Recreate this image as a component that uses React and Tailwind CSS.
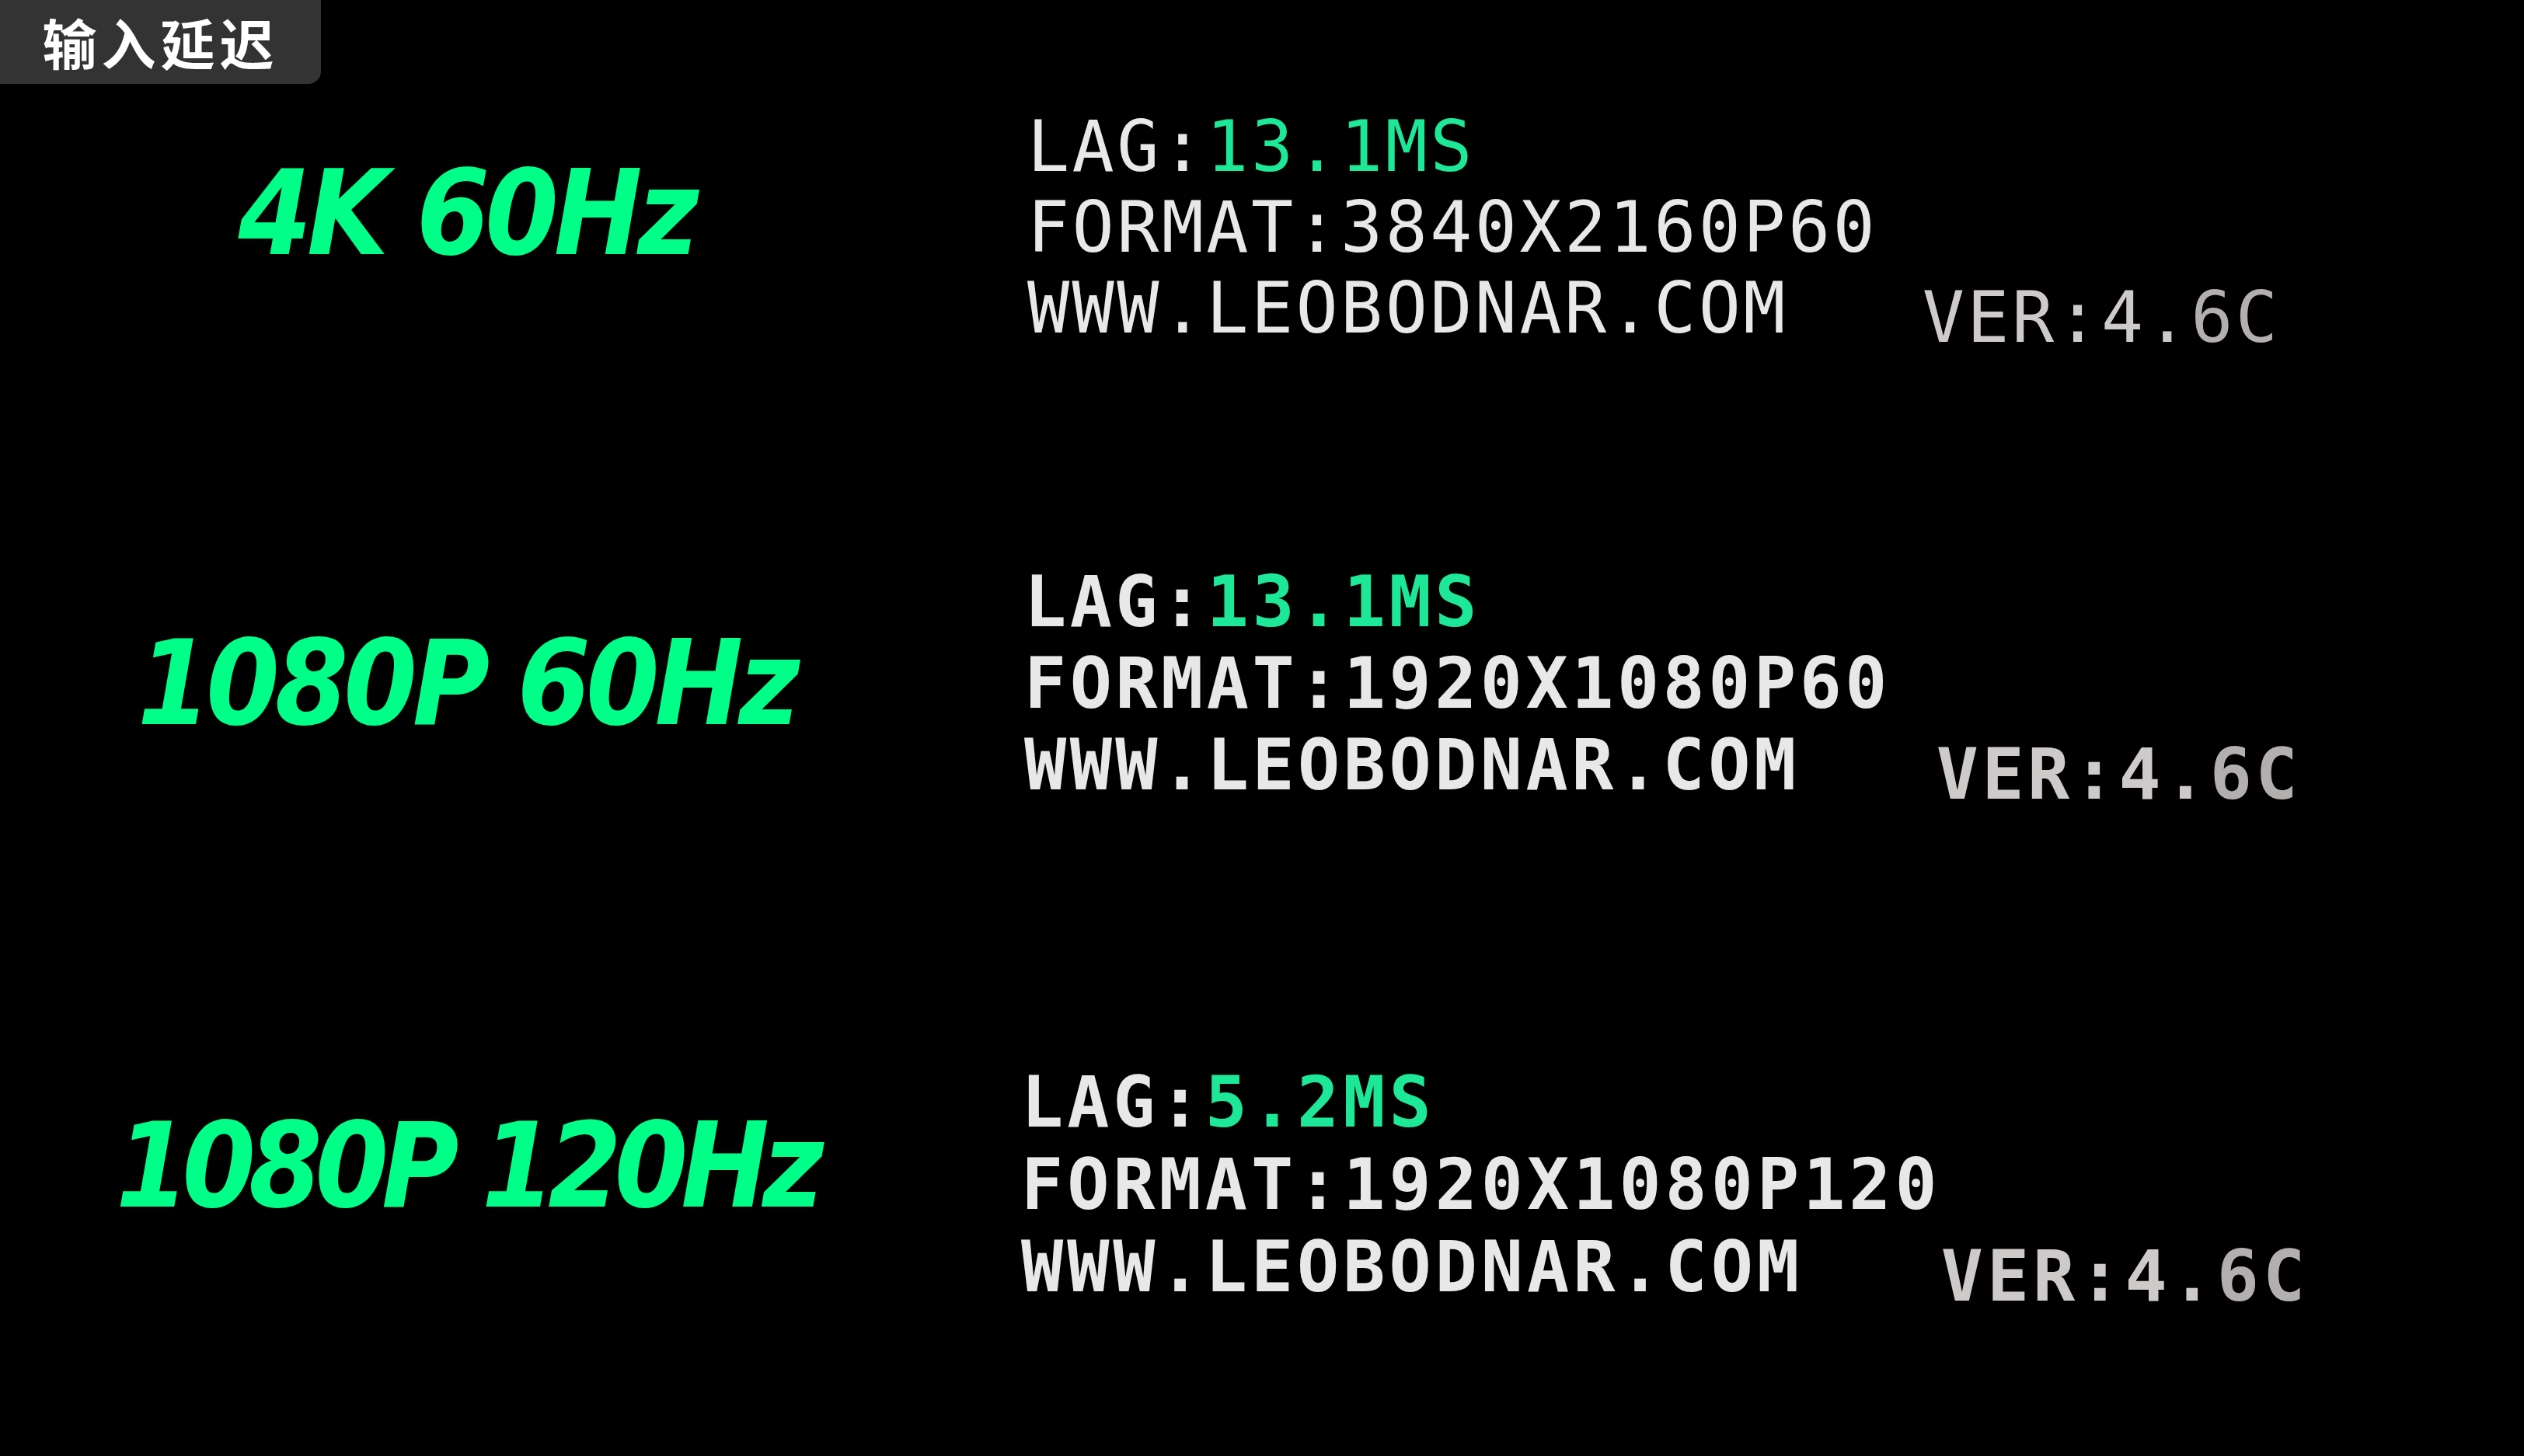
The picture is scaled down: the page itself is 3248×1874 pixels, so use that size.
import React from "react";

const rows = [
  {
    title: "4K 60Hz",
    lag: "13.1MS",
    format: "3840X2160P60",
    mt: "mt-[29px]",
    titleMt: "mt-[63px]",
    lh: "leading-[104px]",
    weight: "font-normal",
    left: "ml-[1322px]",
    track: "tracking-[3.4px]",
    htrack: "tracking-[-6px]",
  },
  {
    title: "1080P 60Hz",
    lag: "13.1MS",
    format: "1920X1080P60",
    mt: "mt-[261px]",
    titleMt: "mt-[83px]",
    lh: "leading-[105px]",
    weight: "font-bold",
    left: "ml-[1318px]",
    track: "tracking-[4.5px]",
    htrack: "tracking-[-6px]",
  },
  {
    title: "1080P 120Hz",
    lag: "5.2MS",
    format: "1920X1080P120",
    mt: "mt-[317px]",
    titleMt: "mt-[60px]",
    lh: "leading-[106px]",
    weight: "font-bold",
    left: "ml-[1314px]",
    track: "tracking-[5px]",
    htrack: "tracking-[-9px]",
  },
];

const mono = { fontFamily: '"DejaVu Sans Mono", "Liberation Mono", monospace' };
const head = { fontFamily: '"DejaVu Sans Condensed", "DejaVu Sans", sans-serif' };
const cjk = { fontFamily: '"Noto Sans CJK SC", "Noto Sans", sans-serif' };

function Row({ r }) {
  return (
    <div className={`relative flex items-start ${r.mt}`}>
      <div
        className={`absolute left-0 w-[1200px] text-center ${r.titleMt} text-[151px] leading-[151px] font-bold italic text-[#00ff88] ${r.htrack} whitespace-nowrap`}
        style={head}
      >
        {r.title}
      </div>
      <div
        className={`${r.left} flex flex-col text-[90px] ${r.lh} ${r.weight} ${r.track} text-[#e9e8e8] whitespace-pre`}
        style={mono}
      >
        <div>
          LAG:<span className="text-[#1de897]">{r.lag}</span>
        </div>
        <div>FORMAT:{r.format}</div>
        <div>
          WWW.LEOBODNAR.COM{"   "}
          <span className="inline-block align-[-12px] text-[#cfcaca]">
            VER:4.<span className="text-[#b3afaf]">6C</span>
          </span>
        </div>
      </div>
    </div>
  );
}

export default function App() {
  return (
    <div className="w-[3248px] h-[1874px] bg-black overflow-hidden">
      <div
        className="w-[413px] h-[108px] bg-[#333333] rounded-br-[16px] flex items-center justify-center text-white text-[70px] font-bold tracking-[6px] leading-none"
        style={cjk}
      >
        输入延迟
      </div>
      {rows.map((r) => (
        <Row key={r.title} r={r} />
      ))}
    </div>
  );
}
